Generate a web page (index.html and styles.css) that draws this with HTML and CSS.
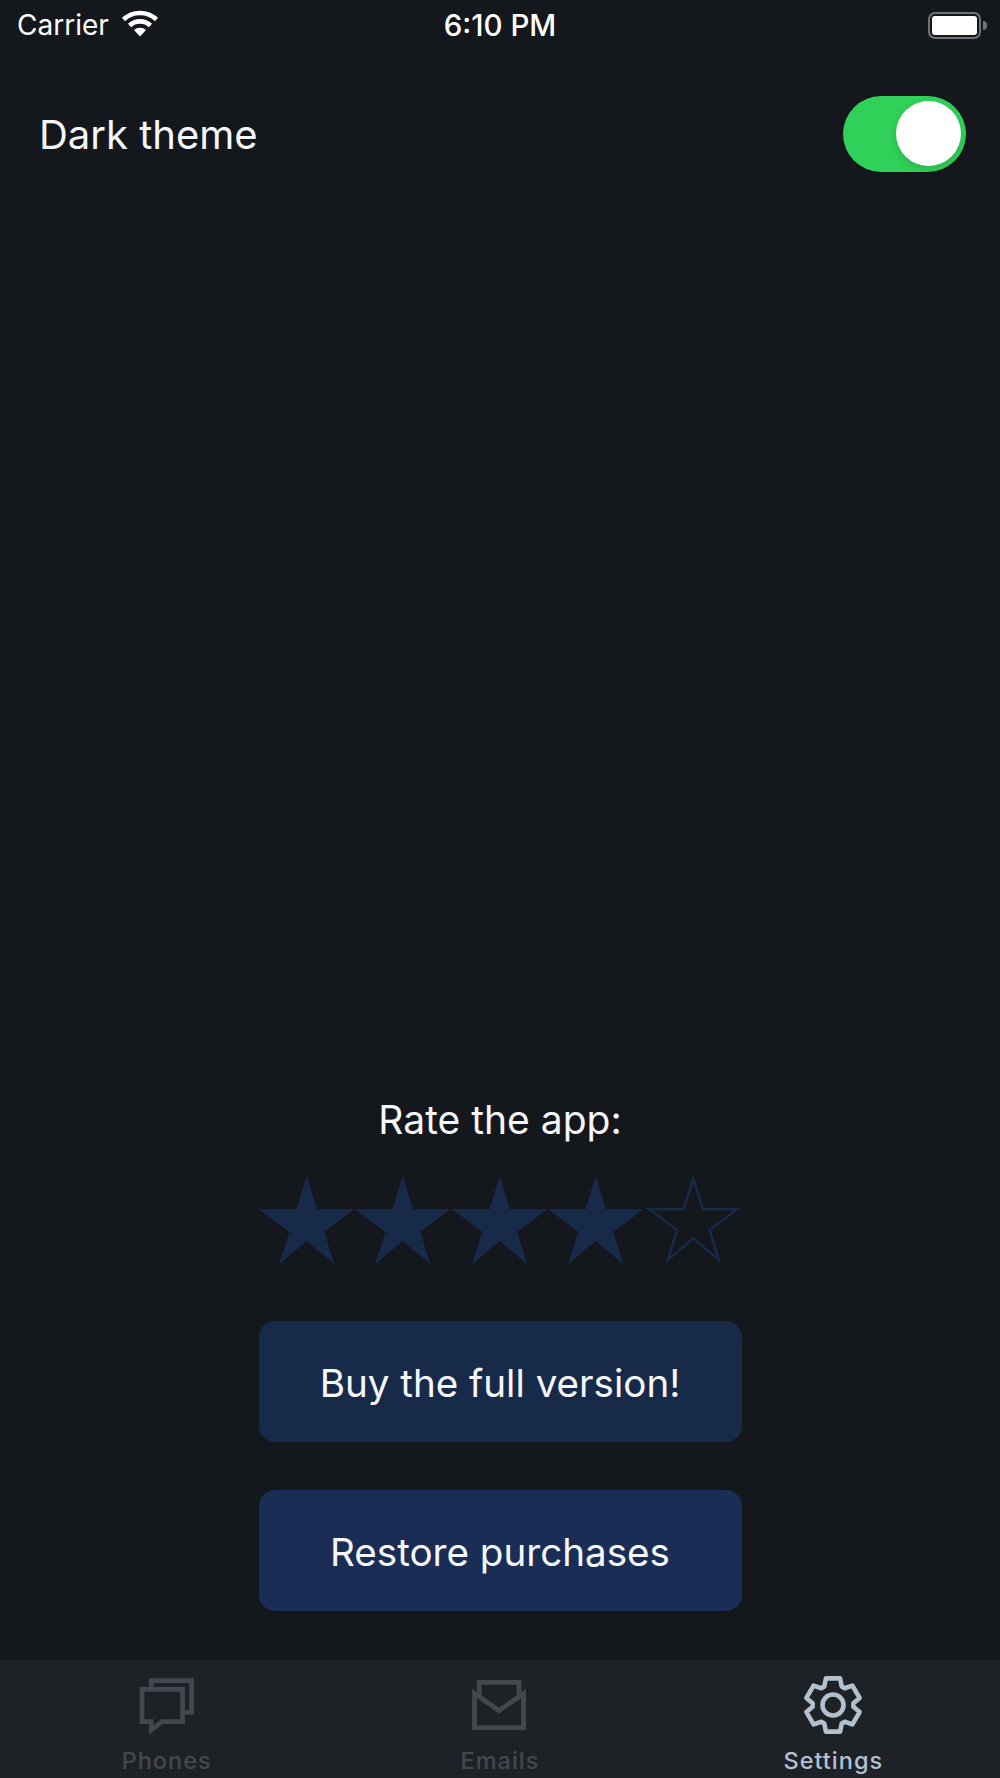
FILE: index.html
```html
<!DOCTYPE html>
<html lang="en">
<head>
    <meta charset="UTF-8">
    <title>Settings</title>
    <link rel="stylesheet" href="styles.css">
</head>
<body>
    <div id="screen">
        <div class="status-bar">
            <div class="status-left">
                <span class="carrier">Carrier</span>
                <svg class="wifi" width="38" height="28" viewBox="0 0 38 28">
                    <path d="M2.5 10.5a24 24 0 0 1 33 0M8.5 16.5a15.5 15.5 0 0 1 21 0" fill="none" stroke="#fff" stroke-width="4.6"/>
                    <path d="M13 21a9 9 0 0 1 12 0l-6 6.5z" fill="#fff"/>
                </svg>
            </div>
            <span class="time">6:10 PM</span>
            <div class="status-right">
                <div class="battery"><div class="battery-fill"></div></div>
                <div class="battery-nub"></div>
            </div>
        </div>

        <div class="theme-row">
            <span class="theme-label">Dark theme</span>
            <div class="switch"><div class="knob"></div></div>
        </div>

        <div class="rate-box">
            <div class="rate-title">Rate the app:</div>
            <div class="stars">
                <svg class="star" width="96.5" height="89" viewBox="0 0 96.5 89"><polygon points="47.7,0 58,33.3 95.3,33.3 65.3,56 75.3,88.3 47.7,65 20,88.3 30.3,56 0,33.3 37.3,33.3"/></svg>
                <svg class="star" width="96.5" height="89" viewBox="0 0 96.5 89"><polygon points="47.7,0 58,33.3 95.3,33.3 65.3,56 75.3,88.3 47.7,65 20,88.3 30.3,56 0,33.3 37.3,33.3"/></svg>
                <svg class="star" width="96.5" height="89" viewBox="0 0 96.5 89"><polygon points="47.7,0 58,33.3 95.3,33.3 65.3,56 75.3,88.3 47.7,65 20,88.3 30.3,56 0,33.3 37.3,33.3"/></svg>
                <svg class="star" width="96.5" height="89" viewBox="0 0 96.5 89"><polygon points="47.7,0 58,33.3 95.3,33.3 65.3,56 75.3,88.3 47.7,65 20,88.3 30.3,56 0,33.3 37.3,33.3"/></svg>
                <svg class="star star-empty" width="96.5" height="89" viewBox="0 0 96.5 89"><polygon transform="translate(4.4 2.6) scale(.92)" points="47.7,0 58,33.3 95.3,33.3 65.3,56 75.3,88.3 47.7,65 20,88.3 30.3,56 0,33.3 37.3,33.3"/></svg>
            </div>
            <div class="btn btn-buy">Buy the full version!</div>
            <div class="btn btn-restore">Restore purchases</div>
        </div>

        <ul class="tab-bar">
            <li class="tab">
                <svg class="tab-icon" width="60" height="60" viewBox="0 0 60 60">
                    <path d="M14.3 12.3V5.7H54.6V37.3H48" fill="none" stroke="currentColor" stroke-width="4.7"/>
                    <path d="M5 14.3H45.6V46.7H25L14.3 55V46.7H5z" fill="none" stroke="currentColor" stroke-width="4.7"/>
                </svg>
                <span>Phones</span>
            </li>
            <li class="tab">
                <svg class="tab-icon" width="60" height="60" viewBox="0 0 60 60">
                    <path d="M4.5 18.5V52.7H53.5V18.5L29 35.5 4.5 18.5z" fill="none" stroke="currentColor" stroke-width="4.8"/>
                    <path d="M9.2 21.5V7.3H49V21.5" fill="none" stroke="currentColor" stroke-width="4.8"/>
                </svg>
                <span>Emails</span>
            </li>
            <li class="tab tab-active">
                <svg class="tab-icon" width="60" height="60" viewBox="0 0 60 60">
                    <polygon points="22.9,3.4 37.1,3.4 38.7,11.4 41.8,13.2 49.4,10.6 56.6,22.9 50.4,28.2 50.4,31.8 56.6,37.1 49.4,49.4 41.8,46.8 38.7,48.6 37.1,56.6 22.9,56.6 21.3,48.6 18.2,46.8 10.6,49.4 3.4,37.1 9.6,31.8 9.6,28.2 3.4,22.9 10.6,10.6 18.2,13.2 21.3,11.4" fill="none" stroke="currentColor" stroke-width="4.6" stroke-linejoin="round"/>
                    <circle cx="30" cy="30" r="10.5" fill="none" stroke="currentColor" stroke-width="4.6"/>
                </svg>
                <span>Settings</span>
            </li>
        </ul>
    </div>
</body>
</html>
```
FILE: styles.css
```css
*{
    margin: 0;
    padding: 0;
    box-sizing: border-box;
}
ul{
    list-style: none;
}
body{
    background: #14181d;
    color: #f5f7fb;
    font-family: Inter, "Liberation Sans", sans-serif;
}
#screen{
    width: 1000px;
    height: 1778px;
    display: flex;
    flex-direction: column;
}
.status-bar{
    height: 50px;
    padding: 0 13px;
    display: grid;
    grid-template-columns: 1fr auto 1fr;
    align-items: center;
    color: #fff;
}
.status-left{
    display: flex;
    align-items: center;
    gap: 12px;
    height: 50px;
    padding-left: 4px;
}
.carrier{
    font-size: 28px;
}
.wifi{
    margin-bottom: 4px;
}
.time{
    font-size: 29.5px;
    font-weight: 500;
}
.status-right{
    display: flex;
    justify-content: flex-end;
    align-items: center;
    gap: 2px;
}
.battery{
    width: 53px;
    height: 27px;
    border: 2px solid #717377;
    border-radius: 7px;
    padding: 2px;
}
.battery-fill{
    height: 100%;
    background: #fff;
    border-radius: 3px;
}
.battery-nub{
    width: 4px;
    height: 9px;
    background: #717377;
    border-radius: 0 4px 4px 0;
}
.theme-row{
    height: 76px;
    margin-top: 46px;
    padding: 0 34px 0 39px;
    display: flex;
    justify-content: space-between;
    align-items: center;
}
.theme-label{
    font-size: 40px;
}
.switch{
    width: 123px;
    height: 76px;
    padding: 5px 5px 5px 0;
    background: #30d158;
    border-radius: 38px;
    display: flex;
    justify-content: flex-end;
}
.knob{
    width: 65px;
    height: 65px;
    background: #fff;
    border-radius: 50%;
    box-shadow: 0 3px 8px rgba(0,0,0,0.15);
}
.rate-box{
    flex: 1;
    display: flex;
    flex-direction: column;
    justify-content: flex-end;
    align-items: center;
    padding-bottom: 49px;
}
.rate-title{
    font-size: 39px;
    line-height: 46px;
    margin-bottom: 33px;
}
.stars{
    display: flex;
    width: 483px;
    margin-bottom: 56px;
}
.star{
    display: block;
    fill: #182a4a;
}
.star-empty{
    fill: none;
    stroke: #182a4a;
    stroke-width: 2.6;
}
.btn{
    width: 483px;
    height: 121px;
    padding-top: 2px;
    border-radius: 16px;
    font-size: 38.6px;
    display: flex;
    justify-content: center;
    align-items: center;
}
.btn-buy{
    background: #182a4a;
    margin-bottom: 48px;
}
.btn-restore{
    background: #192d55;
}
.tab-bar{
    height: 118px;
    background: #1e2227;
    display: flex;
}
.tab{
    flex: 1;
    display: flex;
    flex-direction: column;
    align-items: center;
    padding-top: 15px;
    color: #44484e;
    font-size: 23.5px;
    font-weight: 500;
    letter-spacing: 1px;
}
.tab-icon{
    display: block;
    margin-bottom: 11px;
}
.tab-active{
    color: #b3c0d0;
}
```
